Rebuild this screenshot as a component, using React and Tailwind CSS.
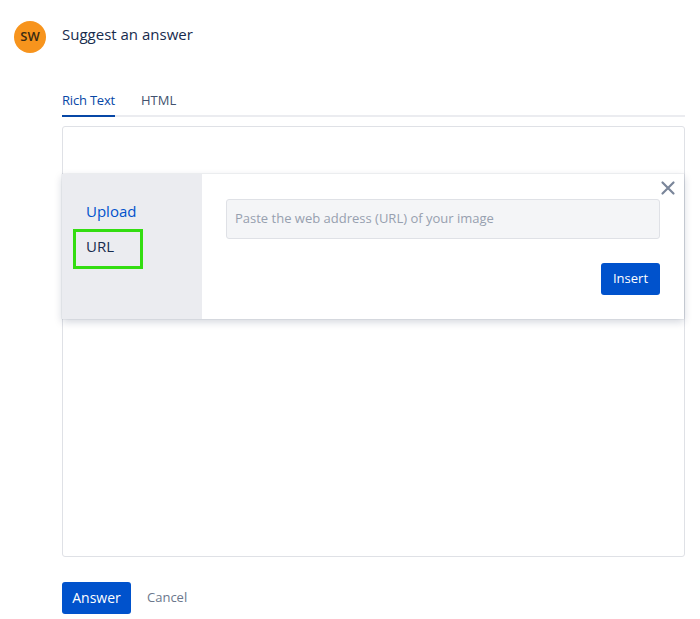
import React from "react";

const font = { fontFamily: '"Open Sans", "Noto Sans", sans-serif' };

export default function App() {
  return (
    <div className="bg-white w-[700px] h-[619px] text-[#172b4d]" style={font}>
      <div className="flex pt-[21px] pl-[14px]">
        {/* avatar */}
        <div className="w-[32px] h-[32px] rounded-full bg-[#f7941d] flex items-center justify-center text-[13px] font-semibold text-[#3a2a12] shrink-0">
          SW
        </div>
        <div className="ml-[16px] flex-1 pr-[15px]">
          <div className="text-[15px] leading-[28px] -mt-[1px]">Suggest an answer</div>

          {/* tabs */}
          <div className="mt-[43px] flex border-b-2 border-[#ebecf0] text-[13px]">
            <div className="pb-[4px] border-b-2 border-[#0747a6] -mb-[2px] text-[#0747a6] tracking-[-0.2px]">Rich Text</div>
            <div className="ml-[26px] pb-[4px] text-[#42526e]">HTML</div>
          </div>

          {/* editor */}
          <div className="relative mt-[9px] h-[431px] border border-[#dfe1e6] rounded-[3px]">
            <div className="absolute left-[-1px] right-[0px] top-[47px] h-[145px] flex bg-white shadow-[0_3px_8px_rgba(9,30,66,0.18),0_0_1px_rgba(9,30,66,0.25)]">
              <div className="w-[140px] bg-[#ebecf0] pt-[25px] pl-[24px] text-[15px]">
                <div className="text-[#0052cc] leading-[24px]">Upload</div>
                <div className="mt-[6px] -ml-[13px] w-[70px] h-[40px] border-[3px] border-[#33dd11] pl-[10px] pt-[2px] leading-[24px] text-[#172b4d]">
                  URL
                </div>
              </div>
              <div className="flex-1 relative pl-[24px] pr-[24px] pt-[25px]">
                <button className="absolute right-[8px] top-[6px] text-[#7a869a]">
                  <svg width="16" height="16" viewBox="0 0 16 16" stroke="currentColor" strokeWidth="2.2" strokeLinecap="round">
                    <path d="M2.5 2.5l11 11M13.5 2.5l-11 11" />
                  </svg>
                </button>
                <div className="h-[40px] bg-[#f4f5f7] border border-[#dfe1e6] rounded-[3px] flex items-center pl-[8px] text-[13px] text-[#97a0af]">
                  Paste the web address (URL) of your image
                </div>
                <div className="flex justify-end mt-[24px]">
                  <button className="h-[32px] w-[59px] bg-[#0052cc] rounded-[3px] text-white text-[13px]">Insert</button>
                </div>
              </div>
            </div>
          </div>

          {/* actions */}
          <div className="mt-[25px] flex items-center">
            <button className="h-[32px] w-[69px] bg-[#0052cc] rounded-[3px] text-white text-[14px]">Answer</button>
            <button className="ml-[16px] text-[13px] text-[#6b778c]">Cancel</button>
          </div>
        </div>
      </div>
    </div>
  );
}
